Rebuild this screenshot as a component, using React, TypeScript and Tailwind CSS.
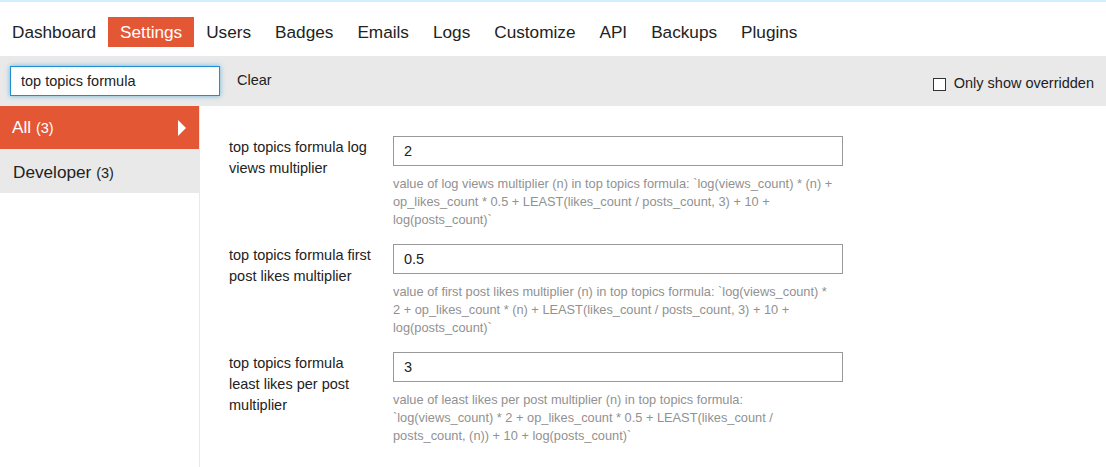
import { useState } from 'react';

const tabs = ['Dashboard', 'Settings', 'Users', 'Badges', 'Emails', 'Logs', 'Customize', 'API', 'Backups', 'Plugins'];

const settings = [
  {
    label: 'top topics formula log views multiplier',
    value: '2',
    description:
      'value of log views multiplier (n) in top topics formula: `log(views_count) * (n) + op_likes_count * 0.5 + LEAST(likes_count / posts_count, 3) + 10 + log(posts_count)`',
  },
  {
    label: 'top topics formula first post likes multiplier',
    value: '0.5',
    description:
      'value of first post likes multiplier (n) in top topics formula: `log(views_count) * 2 + op_likes_count * (n) + LEAST(likes_count / posts_count, 3) + 10 + log(posts_count)`',
  },
  {
    label: 'top topics formula least likes per post multiplier',
    value: '3',
    description:
      'value of least likes per post multiplier (n) in top topics formula: `log(views_count) * 2 + op_likes_count * 0.5 + LEAST(likes_count / posts_count, (n)) + 10 + log(posts_count)`',
  },
];

export default function App() {
  const [filter, setFilter] = useState('top topics formula');
  const [onlyOverridden, setOnlyOverridden] = useState(false);

  return (
    <div className="min-h-screen flex flex-col bg-white text-[#222] font-['Liberation_Sans',Arial,sans-serif]">
      <div className="h-[2px] bg-[#d1f0ff]" />

      {/* admin tabs */}
      <nav className="flex mt-[15px] mb-[9px]">
        {tabs.map((t) => (
          <a
            key={t}
            className={
              t === 'Settings'
                ? 'h-[30px] px-3 text-[17.2px] leading-[31px] bg-[#e45735] text-white'
                : 'h-[30px] px-3 text-[17.2px] leading-[31px] text-[#222]'
            }
          >
            {t}
          </a>
        ))}
      </nav>

      {/* filter bar */}
      <div className="h-[50px] bg-[#e9e9e9] flex items-center pl-[10px] pr-[12px]">
        <input
          value={filter}
          onChange={(e) => setFilter(e.target.value)}
          className="w-[210px] h-[30px] px-[10px] text-[14.5px] bg-white border border-[#1d8fd6] shadow-[0_0_5px_rgba(0,136,204,0.55)] outline-none"
        />
        <button onClick={() => setFilter('')} className="ml-[17px] text-[14.5px] text-[#222]">
          Clear
        </button>
        <label className="ml-auto mt-[6px] flex items-center gap-2 text-[14.5px]">
          <input
            type="checkbox"
            checked={onlyOverridden}
            onChange={(e) => setOnlyOverridden(e.target.checked)}
            className="appearance-none w-[13px] h-[13px] border border-[#333] bg-white"
          />
          Only show overridden
        </label>
      </div>

      <div className="flex flex-1">
        {/* categories */}
        <div className="w-[200px] border-r border-[#e9e9e9]">
          <div className="h-[43px] flex items-center justify-between pl-3 pr-3 bg-[#e45735] text-white">
            <span className="text-[17.2px]">
              All <span className="text-[14.5px]">(3)</span>
            </span>
            <span className="mr-[1px] w-0 h-0 border-y-[8px] border-y-transparent border-l-[8px] border-l-white" />
          </div>
          <div className="h-[44px] flex items-center pl-[13px] pt-[3px] bg-[#e9e9e9]">
            <span className="text-[17.2px]">
              Developer <span className="text-[14.5px]">(3)</span>
            </span>
          </div>
        </div>

        {/* setting rows */}
        <div className="pt-[30px] pl-[29px]">
          {settings.map((s) => (
            <div key={s.label} className="flex mb-[15px]">
              <div className="w-[164px] pt-[1px] pr-[15px] text-[14.5px] leading-[21px]">{s.label}</div>
              <div className="w-[450px]">
                <input
                  defaultValue={s.value}
                  className="w-full h-[30px] px-[10px] text-[14.5px] bg-white border border-[#999] outline-none"
                />
                <div className="mt-[9px] pr-[9px] text-[12.8px] leading-[18px] text-[#919191]">{s.description}</div>
              </div>
            </div>
          ))}
        </div>
      </div>
    </div>
  );
}
